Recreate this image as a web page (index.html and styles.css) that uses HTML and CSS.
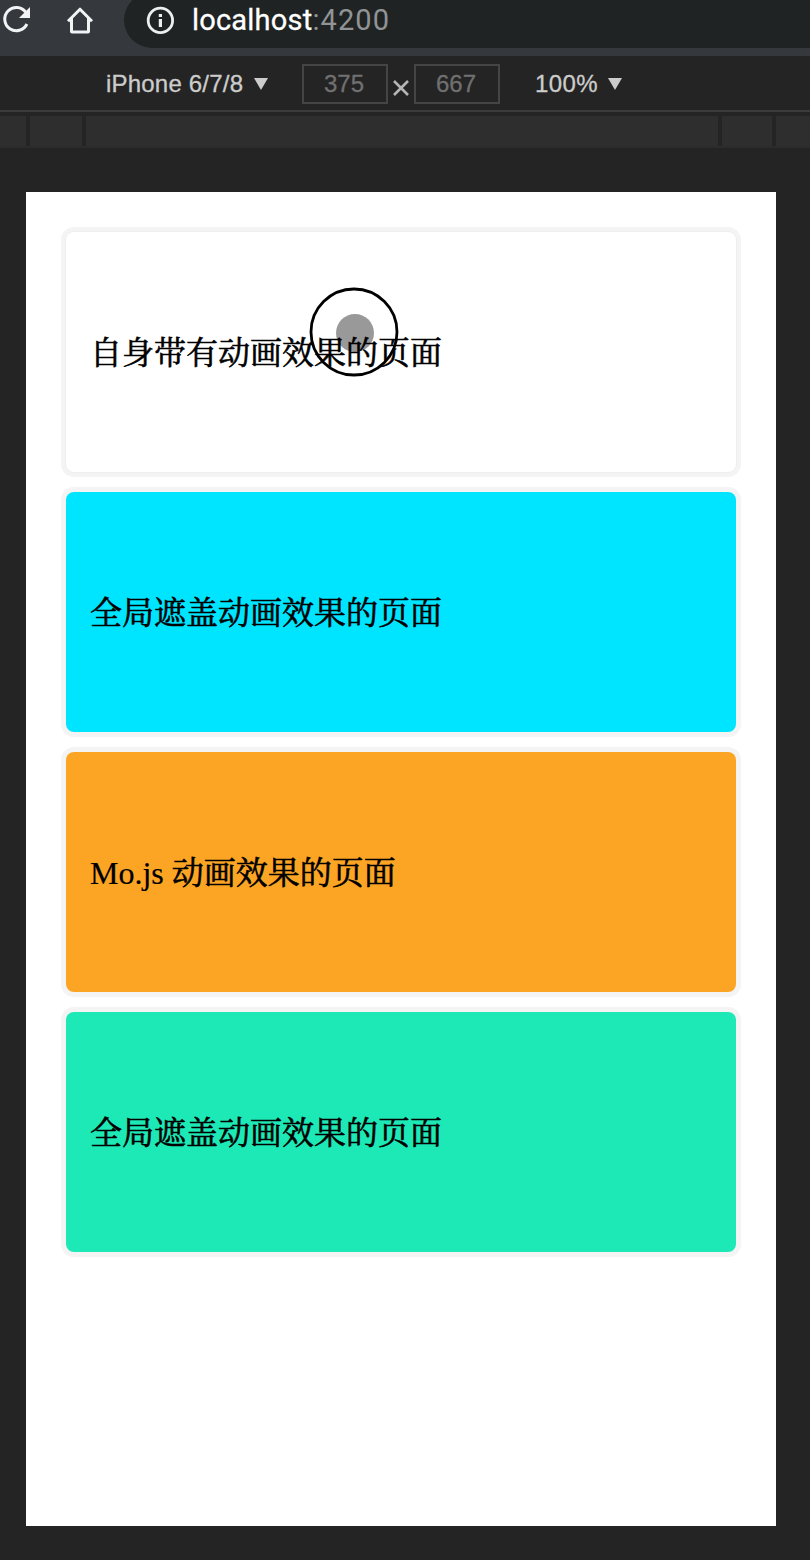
FILE: index.html
```html
<!DOCTYPE html>
<html lang="zh-CN">
<head>
<meta charset="utf-8">
<title>localhost:4200</title>
<link rel="stylesheet" href="styles.css">
</head>
<body>
<header class="browser">
  <svg class="reload" width="32" height="40" viewBox="0 0 32 40" fill="none"><path d="M25.7 12.2A11.6 11.6 0 1 0 26.9 24" stroke="#f1f3f4" stroke-width="3"/><path d="M30 7v11H19z" fill="#f1f3f4"/></svg>
  <svg class="home" width="28" height="40" viewBox="0 0 28 40" fill="none" stroke="#f1f3f4" stroke-width="3"><path d="M2 21.3 14 9.2l12 12.1M5.5 18.5v13a.5.5 0 0 0 .5.5h16a.5.5 0 0 0 .5-.5v-13" stroke-linejoin="round"/></svg>
  <div class="address">
    <svg class="info" width="28" height="28" viewBox="0 0 28 28" fill="none" stroke="#eceeef"><circle cx="14.4" cy="14.4" r="12.2" stroke-width="2.8"/><path d="M14.4 13v8M14.4 8v3" stroke-width="3.2"/></svg>
    <span class="host">localhost</span><span class="port">:4200</span>
  </div>
</header>
<div class="toolbar">
  <div class="device">iPhone 6/7/8</div><i class="arrow"></i>
  <div class="size first">375</div>
  <svg class="times" width="26" height="40" viewBox="0 0 26 40" stroke="#b5b5b5" stroke-width="2.6"><path d="m6 17 14 14M20 17 6 31"/></svg>
  <div class="size">667</div>
  <div class="zoom">100%</div><i class="arrow"></i>
</div>
<div class="ruler"><i></i><i></i><i></i><i></i><i></i></div>
<main class="screen">
  <section class="card white">
    <svg class="ripple" width="90" height="90" viewBox="0 0 90 90"><circle cx="45" cy="45" r="43" fill="none" stroke="#000" stroke-width="2.8"/><circle cx="46" cy="46" r="19" fill="#999"/></svg>
    <span class="label">自身带有动画效果的页面</span>
  </section>
  <section class="card cyan"><span class="label">全局遮盖动画效果的页面</span></section>
  <section class="card orange"><span class="label">Mo.js <span class="han">动画效果的页面</span></span></section>
  <section class="card green"><span class="label">全局遮盖动画效果的页面</span></section>
</main>
</body>
</html>
```

FILE: styles.css
```css
* { box-sizing: border-box; }
body { margin: 0; height: 1560px; overflow: hidden; background: #242424; font-family: "Liberation Sans", Arial, sans-serif; }
.browser { display: flex; height: 56px; background: #35383d; overflow: hidden; }
.reload { flex: none; }
.home { flex: none; margin-left: 34px; }
.address { display: flex; align-items: center; flex: 1; height: 56px; margin: -8px -30px 0 30px; padding: 0 0 0 22px; border-radius: 28px; background: #202324; font: 29px/56px Roboto, sans-serif; white-space: nowrap; }
.info { flex: none; margin-right: 18px; }
.host { color: #fff; letter-spacing: .2px; -webkit-text-stroke: .3px #fff; }
.port { color: #919394; letter-spacing: 1.1px; }
.toolbar { display: flex; height: 56px; padding: 8px 0 0 106px; border-bottom: 2px solid #3c3c3c; color: #ccc; font-size: 24px; line-height: 40px; white-space: nowrap; }
.device { width: 148px; letter-spacing: .2px; -webkit-text-stroke: .3px #ccc; }
.arrow { width: 14px; height: 12px; margin-top: 14px; background: #ccc; clip-path: polygon(0 0, 100% 0, 50% 100%); }
.size { width: 86px; height: 40px; padding-right: 2px; border: 2px solid #454545; color: #707070; line-height: 36px; text-align: center; -webkit-text-stroke: .3px #707070; }
.size.first { margin-left: 34px; }
.times { flex: none; }
.zoom { width: 73px; margin-left: 35px; letter-spacing: .4px; -webkit-text-stroke: .3px #ccc; }
.ruler { display: grid; grid-template-columns: 26px 52px 632px 50px 34px; column-gap: 4px; height: 32px; margin-top: 4px; border-bottom: 2px solid #2c2c2c; }
.ruler i { background: #2e2e2e; }
.screen { display: flex; flex-direction: column; gap: 20px; width: 750px; height: 1334px; margin: 44px 0 0 26px; padding: 40px; background: #fff; }
.card { position: relative; flex: none; height: 240px; padding: 1px 0 0 24px; border-radius: 8px; box-shadow: 0 0 0 5px #f4f4f4; color: #000; font: 32px/240px "Liberation Serif", "Songti SC", "Noto Serif CJK SC", "Noto Sans CJK SC", serif; white-space: nowrap; }
.label { position: relative; -webkit-text-stroke: .6px #000; }
.orange .label { -webkit-text-stroke-width: .2px; }
.orange .han { -webkit-text-stroke-width: .6px; }
.white { background: #fff; box-shadow: 0 0 0 1px #eee, 0 0 0 5px #f4f4f4; }
.cyan { background: #00e5ff; }
.orange { background: #fca524; }
.green { background: #1de9b6; }
.ripple { position: absolute; left: 243px; top: 55px; }
```
